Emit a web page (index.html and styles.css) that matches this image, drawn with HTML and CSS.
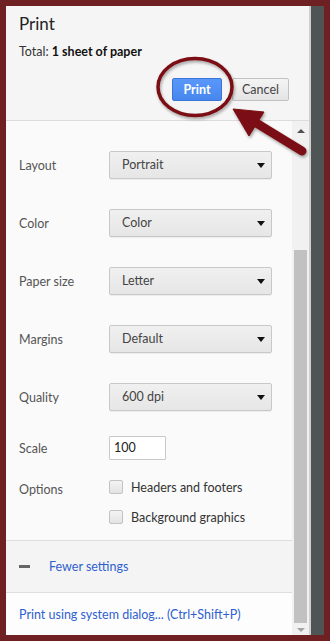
FILE: index.html
```html
<!DOCTYPE html>
<html lang="en">
<head>
	<meta charset="UTF-8">
	<title>Print</title>
	<link rel="stylesheet" href="styles.css">
</head>
<body>
	<div class="frame">
		<div class="window">
			<div class="panel">
				<div class="header">
					<h1 class="title">Print</h1>
					<div class="total">Total: <b>1 sheet of paper</b></div>
					<div class="buttons">
						<button class="btn btn-print">Print</button>
						<button class="btn btn-cancel">Cancel</button>
					</div>
				</div>
				<div class="body">
					<div class="content">
						<div class="settings">
							<div class="row">
								<div class="label">Layout</div>
								<div class="select">Portrait<span class="caret"></span></div>
							</div>
							<div class="row">
								<div class="label">Color</div>
								<div class="select">Color<span class="caret"></span></div>
							</div>
							<div class="row">
								<div class="label">Paper size</div>
								<div class="select">Letter<span class="caret"></span></div>
							</div>
							<div class="row">
								<div class="label">Margins</div>
								<div class="select">Default<span class="caret"></span></div>
							</div>
							<div class="row">
								<div class="label">Quality</div>
								<div class="select">600 dpi<span class="caret"></span></div>
							</div>
							<div class="row row-scale">
								<div class="label">Scale</div>
								<div class="input">100</div>
							</div>
							<div class="row row-options">
								<div class="label">Options</div>
								<div class="checks">
									<label class="check"><span class="box"></span>Headers and footers</label>
									<label class="check"><span class="box"></span>Background graphics</label>
								</div>
							</div>
						</div>
						<div class="fewer">
							<span class="minus"></span>
							<a href="javascript:;">Fewer settings</a>
						</div>
						<div class="system">
							<a href="javascript:;">Print using system dialog... (Ctrl+Shift+P)</a>
						</div>
					</div>
					<div class="scrollbar">
						<span class="arrow-up"></span>
						<div class="track"><div class="thumb"></div></div>
						<span class="arrow-down"></span>
					</div>
				</div>
			</div>
			<div class="edge"></div>
			<div class="gutter"></div>
		</div>

		<svg class="callout" width="330" height="641" viewBox="0 0 330 641">
			<defs>
				<filter id="shadow" x="-20%" y="-20%" width="140%" height="140%">
					<feDropShadow dx="1" dy="2" stdDeviation="1.5" flood-color="#000" flood-opacity="0.35"/>
				</filter>
			</defs>
			<g filter="url(#shadow)" fill="none" stroke="#7a0f12">
				<ellipse cx="195" cy="87" rx="37" ry="28.5" stroke-width="3.5"/>
				<line x1="302" y1="151" x2="253" y2="121" stroke-width="9" stroke-linecap="round"/>
				<polygon points="233,109 264,112 249,136" fill="#7a0f12" stroke-width="1" stroke-linejoin="round"/>
			</g>
		</svg>
	</div>
</body>
</html>
```

FILE: styles.css
```css
*{padding: 0;margin: 0;box-sizing: border-box;}
body{
	background: #6f2023;
	font-family: Lato, "Noto Sans", sans-serif;
	font-size: 12.5px;
	color: #444;
}
.frame{
	width: 330px;
	height: 641px;
	padding: 6px;
	position: relative;
}
.window{
	display: flex;
	height: 629px;
	width: 318px;
}
.panel{
	width: 303px;
	display: flex;
	flex-direction: column;
	background: #fafafa;
}
.edge{
	width: 2px;
	background: #cfcfcf;
}
.gutter{
	width: 13px;
	background: #4f5455;
}

/* header */
.header{
	height: 115px;
	background: #f5f5f5;
	border-bottom: 1px solid #dcdcdc;
	padding: 8px 20px 0 13px;
}
.title{
	font-size: 17px;
	font-weight: normal;
	color: #222;
	line-height: 20px;
}
.total{
	margin-top: 10px;
	color: #333;
	line-height: 16px;
}
.total b{color: #111;}
.buttons{
	display: flex;
	justify-content: flex-end;
	gap: 10px;
	margin-top: 18px;
}
.btn{
	height: 23px;
	font-family: inherit;
	font-size: 12.5px;
	border-radius: 2px;
	line-height: 20px;
}
.btn-print{
	width: 50px;
	color: #fff;
	font-weight: bold;
	background: linear-gradient(#5a97fb, #4787ed);
	border: 1px solid #3a76d8;
}
.btn-cancel{
	width: 57px;
	color: #444;
	background: linear-gradient(#f4f4f4, #e4e4e4);
	border: 1px solid #c2c2c2;
}

/* body */
.body{
	flex: 1;
	display: flex;
	min-height: 0;
}
.content{
	width: 286px;
	display: flex;
	flex-direction: column;
}
.settings{
	flex: 1;
	padding: 30px 20px 0 13px;
}
.row{
	display: flex;
	align-items: center;
	height: 28px;
	margin-bottom: 30px;
}
.label{
	width: 90px;
	color: #555;
}
.select{
	width: 163px;
	height: 28px;
	padding: 0 12px;
	line-height: 26px;
	color: #444;
	border: 1px solid #c8c8c8;
	border-radius: 2px;
	background: linear-gradient(#f0f0f0, #e6e6e6);
	box-shadow: 0 1px 0 rgba(0,0,0,0.05);
	position: relative;
}
.caret{
	position: absolute;
	right: 6px;
	top: 11px;
	border-left: 4px solid transparent;
	border-right: 4px solid transparent;
	border-top: 5px solid #111;
}
.row-scale{
	height: 24px;
	margin-top: -5px;
	margin-bottom: 19px;
}
.input{
	width: 57px;
	height: 24px;
	padding-left: 4px;
	line-height: 22px;
	color: #222;
	background: #fff;
	border: 1px solid #c8c8c8;
	border-radius: 1px;
}
.row-options{
	height: auto;
	align-items: flex-start;
	margin-bottom: 0;
}
.row-options .label{padding-top: 3px;}
.checks{
	display: flex;
	flex-direction: column;
	gap: 14px;
}
.check{
	display: flex;
	align-items: center;
	gap: 8px;
	height: 16px;
	color: #333;
}
.box{
	width: 14px;
	height: 14px;
	border: 1px solid #c3c3c3;
	border-radius: 2px;
	background: linear-gradient(#f3f3f3, #e3e3e3);
}
.fewer{
	height: 53px;
	display: flex;
	align-items: center;
	padding-left: 13px;
	background: #f4f4f4;
	border-top: 1px solid #dedede;
	border-bottom: 1px solid #dedede;
}
.minus{
	width: 11px;
	height: 3px;
	background: #666;
	margin-right: 19px;
}
a{
	color: #2f5fd0;
	text-decoration: none;
}
.system{
	height: 42px;
	display: flex;
	align-items: center;
	padding-left: 13px;
	background: #fdfdfd;
}

/* scrollbar */
.scrollbar{
	width: 17px;
	display: flex;
	flex-direction: column;
	align-items: center;
	background: #f1f1f1;
	padding: 0 2px;
}
.arrow-up, .arrow-down{
	width: 0;
	height: 0;
	border-left: 4px solid transparent;
	border-right: 4px solid transparent;
}
.arrow-up{
	border-bottom: 4px solid #505050;
	margin: 8px 0 0;
}
.arrow-down{
	border-top: 4px solid #a3a3a3;
	margin: 5px 0 3px;
}
.track{
	flex: 1;
	width: 13px;
	display: flex;
	flex-direction: column;
	justify-content: flex-end;
}
.thumb{
	height: 373px;
	background: #c1c1c1;
}

/* annotation */
.callout{
	position: absolute;
	top: 0;
	left: 0;
	pointer-events: none;
}
```
